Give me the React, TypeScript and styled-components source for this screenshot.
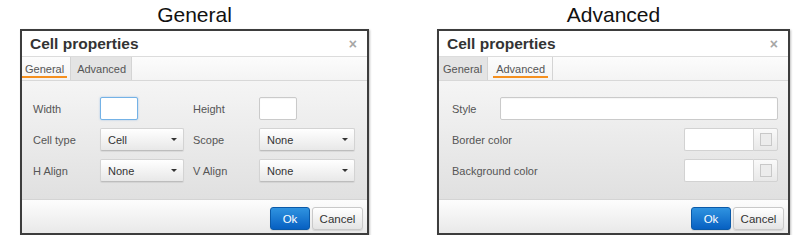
import styled, { createGlobalStyle } from "styled-components";

const GlobalStyle = createGlobalStyle`
  html, body {
    margin: 0;
    background: #fff;
    font-family: "Liberation Sans", Arial, sans-serif;
  }
`;

export default function App() {
  return (
    <>
      <GlobalStyle />
      <Page>
        <Column $w={349}>
          <Caption>General</Caption>
          <Dialog>
            <Header>
              <Title>Cell properties</Title>
              <Close>×</Close>
            </Header>
            <TabStrip>
              <Tab $active $pl={0} $pr={3}>
                <TabLabel $active>General</TabLabel>
              </Tab>
              <Tab $pl={3} $pr={2}>
                <TabLabel>Advanced</TabLabel>
              </Tab>
            </TabStrip>
            <Body $pl={11} $pr={12}>
              <FormGrid>
                <Label>Width</Label>
                <TextInput $w={38} $focus readOnly />
                <Label>Height</Label>
                <TextInput $w={38} readOnly />

                <Label>Cell type</Label>
                <Select $w={84}>
                  Cell <Caret />
                </Select>
                <Label>Scope</Label>
                <Select $w={96}>
                  None <Caret />
                </Select>

                <Label>H Align</Label>
                <Select $w={84}>
                  None <Caret />
                </Select>
                <Label>V Align</Label>
                <Select $w={96}>
                  None <Caret />
                </Select>
              </FormGrid>
            </Body>
            <Footer>
              <Button $primary $w={40}>Ok</Button>
              <Button $w={51}>Cancel</Button>
            </Footer>
          </Dialog>
        </Column>

        <Column $w={353}>
          <Caption>Advanced</Caption>
          <Dialog>
            <Header>
              <Title>Cell properties</Title>
              <Close>×</Close>
            </Header>
            <TabStrip>
              <Tab $pl={1} $pr={2}>
                <TabLabel>General</TabLabel>
              </Tab>
              <Tab $active $pl={5} $pr={4}>
                <TabLabel $active>Advanced</TabLabel>
              </Tab>
            </TabStrip>
            <Body $pl={13} $pr={10}>
              <Stack>
                <Row>
                  <Label style={{ width: 48 }}>Style</Label>
                  <TextInput $grow readOnly />
                </Row>
                <Row>
                  <Label>Border color</Label>
                  <ColorPicker>
                    <ColorField readOnly />
                    <ColorButton>
                      <Swatch />
                    </ColorButton>
                  </ColorPicker>
                </Row>
                <Row>
                  <Label>Background color</Label>
                  <ColorPicker>
                    <ColorField readOnly />
                    <ColorButton>
                      <Swatch />
                    </ColorButton>
                  </ColorPicker>
                </Row>
              </Stack>
            </Body>
            <Footer>
              <Button $primary $w={40}>Ok</Button>
              <Button $w={51}>Cancel</Button>
            </Footer>
          </Dialog>
        </Column>
      </Page>
    </>
  );
}

const Page = styled.div`
  display: flex;
  gap: 68px;
  padding-left: 20px;
`;

const Column = styled.section<{ $w: number }>`
  width: ${(p) => p.$w}px;
  display: flex;
  flex-direction: column;
`;

const Caption = styled.h2`
  margin: 3px 0 2px;
  font: 400 21px/24px "Liberation Sans", Arial, sans-serif;
  text-align: center;
  color: #111;
`;

const Dialog = styled.div`
  box-sizing: border-box;
  height: 206px;
  border: 2px solid #3d3d3d;
  background: #fff;
  display: flex;
  flex-direction: column;
  box-shadow: 1px 1px 2px rgba(0, 0, 0, 0.25);
`;

const Header = styled.div`
  height: 25px;
  flex-shrink: 0;
  border-bottom: 1px solid #dcdcdc;
  display: flex;
  align-items: center;
  justify-content: space-between;
  padding: 0 10px 0 8px;
`;

const Title = styled.h3`
  margin: 0;
  font: 700 15.5px/25px "Liberation Sans", Arial, sans-serif;
  color: #333;
`;

const Close = styled.span`
  font: 700 14px/1 "Liberation Sans", Arial, sans-serif;
  color: #a6a6a6;
`;

const TabStrip = styled.div`
  height: 23px;
  flex-shrink: 0;
  display: flex;
  border-bottom: 1px solid #d8d8d8;
  background: linear-gradient(#fcfcfc, #f4f4f4);
`;

const Tab = styled.div<{ $active?: boolean; $pl: number; $pr: number }>`
  display: flex;
  align-items: flex-end;
  padding: 0 ${(p) => p.$pr}px 2px ${(p) => p.$pl}px;
  background: ${(p) => (p.$active ? "transparent" : "#e4e4e4")};
  border-right: 1px solid #d4d4d4;
  font-size: 11px;
  color: #555;
`;

const TabLabel = styled.span<{ $active?: boolean }>`
  line-height: 13px;
  padding: 0 3px;
  border-bottom: 2px solid ${(p) => (p.$active ? "#f5901f" : "transparent")};
`;

const Body = styled.div<{ $pl: number; $pr: number }>`
  height: 118px;
  flex-shrink: 0;
  box-sizing: border-box;
  padding: 16px ${(p) => p.$pr}px 0 ${(p) => p.$pl}px;
  background: linear-gradient(#f5f5f5, #e0e0e0);
`;

const FormGrid = styled.div`
  display: grid;
  grid-template-columns: 67px 93px 66px 1fr;
  grid-auto-rows: 23px;
  row-gap: 8px;
  align-items: center;
`;

const Stack = styled.div`
  display: flex;
  flex-direction: column;
  gap: 8px;
`;

const Row = styled.div`
  display: flex;
  align-items: center;
  justify-content: space-between;
  height: 23px;
`;

const Label = styled.label`
  font-size: 11px;
  color: #555;
`;

const TextInput = styled.input<{ $w?: number; $focus?: boolean; $grow?: boolean }>`
  box-sizing: border-box;
  width: ${(p) => (p.$w ? `${p.$w}px` : "auto")};
  flex: ${(p) => (p.$grow ? 1 : "none")};
  min-width: 0;
  height: 23px;
  margin: 0;
  padding: 0 4px;
  background: #fff;
  border: 1px solid ${(p) => (p.$focus ? "#74b2e6" : "#cacaca")};
  border-radius: 2px;
  box-shadow: ${(p) =>
    p.$focus ? "0 0 2px rgba(80, 150, 220, 0.5)" : "inset 0 1px 1px rgba(0,0,0,0.04)"};
  outline: none;
`;

const Select = styled.div<{ $w: number }>`
  box-sizing: border-box;
  width: ${(p) => p.$w}px;
  height: 23px;
  display: flex;
  align-items: center;
  justify-content: space-between;
  padding: 0 6px 0 7px;
  border: 1px solid #d3d3d3;
  border-bottom-color: #bdbdbd;
  border-radius: 2px;
  background: linear-gradient(#ffffff, #e8e8e8);
  box-shadow: 0 1px 1px rgba(0, 0, 0, 0.07);
  font-size: 11px;
  color: #333;
`;

const Caret = styled.span`
  width: 0;
  height: 0;
  border-left: 3px solid transparent;
  border-right: 3px solid transparent;
  border-top: 3px solid #333;
`;

const ColorPicker = styled.div`
  display: flex;
`;

const ColorField = styled.input`
  box-sizing: border-box;
  width: 69px;
  height: 23px;
  margin: 0;
  border: 1px solid #d2d2d2;
  border-right: none;
  border-radius: 2px 0 0 2px;
  background: #fff;
  outline: none;
`;

const ColorButton = styled.div`
  box-sizing: border-box;
  width: 25px;
  height: 23px;
  display: flex;
  align-items: center;
  justify-content: center;
  border: 1px solid #d2d2d2;
  border-radius: 0 2px 2px 0;
  background: linear-gradient(#fafafa, #e8e8e8);
`;

const Swatch = styled.div`
  box-sizing: border-box;
  width: 12px;
  height: 13px;
  border: 1px solid #c8c8c8;
  background: #ececec;
`;

const Footer = styled.div`
  flex: 1;
  display: flex;
  justify-content: flex-end;
  align-items: flex-start;
  gap: 2px;
  padding: 7px 4px 0;
  border-top: 1px solid #d4d4d4;
  background: linear-gradient(#fdfdfd, #e9e9e9);
`;

const Button = styled.button<{ $primary?: boolean; $w: number }>`
  box-sizing: border-box;
  width: ${(p) => p.$w}px;
  height: 23px;
  margin: 0;
  padding: 0;
  font: 400 11.5px "Liberation Sans", Arial, sans-serif;
  border-radius: 3px;
  color: ${(p) => (p.$primary ? "#fff" : "#333")};
  border: 1px solid ${(p) => (p.$primary ? "#0b5aa8" : "#c9c9c9")};
  background: ${(p) =>
    p.$primary
      ? "linear-gradient(#2f93e0, #0760c2)"
      : "linear-gradient(#ffffff, #e4e4e4)"};
  box-shadow: 0 1px 1px rgba(0, 0, 0, 0.1);
`;
